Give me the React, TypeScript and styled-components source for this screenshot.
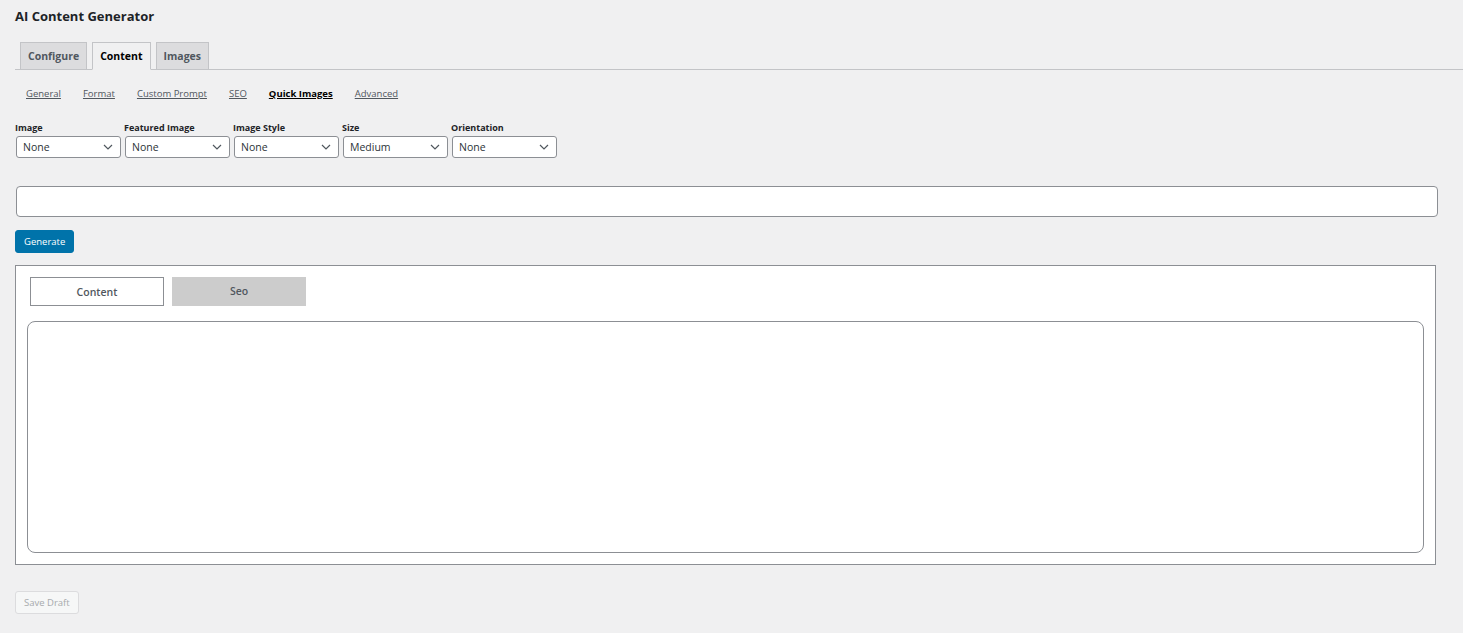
import React, { useState } from 'react';
import styled, { createGlobalStyle } from 'styled-components';

const GlobalStyle = createGlobalStyle`
  html, body {
    margin: 0;
    padding: 0;
    background: #f0f0f1;
  }
  body {
    font-family: "Open Sans", "Noto Sans", "Liberation Sans", sans-serif;
    color: #1d2327;
  }
  * {
    box-sizing: border-box;
  }
`;

const Wrap = styled.div`
  padding: 7px 0 18px 15px;
`;

const Title = styled.h1`
  margin: 0;
  font-size: 13px;
  line-height: 18px;
  font-weight: 700;
  color: #1d2327;
`;

const TabBar = styled.nav`
  display: flex;
  gap: 5px;
  margin-top: 17px;
  padding-left: 5px;
  border-bottom: 1px solid #c3c4c7;
`;

const Tab = styled.a<{ $active?: boolean }>`
  display: block;
  margin-bottom: -1px;
  padding: 0 7px;
  height: 28px;
  line-height: 27px;
  font-size: 10.5px;
  font-weight: 700;
  text-decoration: none;
  cursor: pointer;
  border: 1px solid #c3c4c7;
  border-bottom-color: ${(p) => (p.$active ? '#f0f0f1' : '#c3c4c7')};
  background: ${(p) => (p.$active ? '#f0f0f1' : '#dcdcde')};
  color: ${(p) => (p.$active ? '#000' : '#50575e')};
`;

const SubNav = styled.div`
  display: flex;
  gap: 22px;
  margin-top: 17px;
  padding-left: 11px;
`;

const SubLink = styled.a<{ $active?: boolean }>`
  font-size: 9.5px;
  line-height: 14px;
  text-decoration: underline;
  cursor: pointer;
  font-weight: ${(p) => (p.$active ? 700 : 400)};
  color: ${(p) => (p.$active ? '#000' : '#50575e')};
`;

const Fields = styled.div`
  display: flex;
  gap: 3px;
  margin-top: 20px;
`;

const Field = styled.div`
  display: flex;
  flex-direction: column;
  width: 106px;
`;

const Label = styled.label`
  font-size: 9px;
  line-height: 13px;
  font-weight: 700;
  color: #1d2327;
  margin-bottom: 2px;
`;

const SelectBox = styled.div`
  position: relative;
  margin-left: 1px;
  height: 22px;
  background: #fff;
  border: 1px solid #8c8f94;
  border-radius: 3px;
  font-size: 10.5px;
  line-height: 20px;
  padding-left: 6px;
  color: #2c3338;
  cursor: pointer;

  svg {
    position: absolute;
    right: 7px;
    top: 6px;
  }
`;

const PromptInput = styled.input`
  display: block;
  width: 1422px;
  height: 31px;
  margin: 28px 0 0 1px;
  background: #fff;
  border: 1px solid #8c8f94;
  border-radius: 4px;
  outline: none;
`;

const PrimaryButton = styled.button`
  display: block;
  margin-top: 13px;
  height: 23px;
  padding: 0 8px;
  background: #0073aa;
  border: 1px solid #0073aa;
  border-radius: 3px;
  color: #fff;
  font-family: inherit;
  font-size: 9.5px;
  cursor: pointer;
`;

const ResultBox = styled.div`
  margin-top: 12px;
  width: 1421px;
  height: 300px;
  background: #fff;
  border: 1px solid #8c8f94;
  padding: 11px;
  display: flex;
  flex-direction: column;
`;

const ResultTabs = styled.div`
  display: flex;
  gap: 8px;
  padding-left: 3px;
`;

const ResultTab = styled.button<{ $active?: boolean }>`
  width: 134px;
  height: 29px;
  font-family: inherit;
  font-size: 10.5px;
  font-weight: 600;
  cursor: pointer;
  border: 1px solid ${(p) => (p.$active ? '#8c8f94' : '#ccc')};
  background: ${(p) => (p.$active ? '#fff' : '#ccc')};
  color: #50575e;
  padding: ${(p) => (p.$active ? '1px 0 0' : '0 0 2px')};
`;

const Output = styled.textarea`
  display: block;
  flex: 1;
  margin-top: 15px;
  width: 100%;
  resize: none;
  background: #fff;
  border: 1px solid #8c8f94;
  border-radius: 8px;
  outline: none;
`;

const SecondaryButton = styled.button`
  display: block;
  margin-top: 26px;
  height: 23px;
  padding: 0 8px;
  background: #f6f7f7;
  border: 1px solid #dcdcde;
  border-radius: 3px;
  color: #a7aaad;
  font-family: inherit;
  font-size: 9.5px;
`;

const Chevron = () => (
  <svg width="10" height="8" viewBox="0 0 10 8" fill="none">
    <path d="M1 2l4 4 4-4" stroke="#50575e" strokeWidth="1.2" />
  </svg>
);

const tabs = ['Configure', 'Content', 'Images'];
const sections = ['General', 'Format', 'Custom Prompt', 'SEO', 'Quick Images', 'Advanced'];
const fields = [
  { label: 'Image', value: 'None' },
  { label: 'Featured Image', value: 'None' },
  { label: 'Image Style', value: 'None' },
  { label: 'Size', value: 'Medium' },
  { label: 'Orientation', value: 'None' },
];

export default function App() {
  const [tab, setTab] = useState('Content');
  const [section, setSection] = useState('Quick Images');
  const [view, setView] = useState<'content' | 'seo'>('content');

  return (
    <>
      <GlobalStyle />
      <Wrap>
        <Title>AI Content Generator</Title>

        <TabBar>
          {tabs.map((t) => (
            <Tab key={t} $active={t === tab} onClick={() => setTab(t)}>
              {t}
            </Tab>
          ))}
        </TabBar>

        <SubNav>
          {sections.map((s) => (
            <SubLink key={s} $active={s === section} onClick={() => setSection(s)}>
              {s}
            </SubLink>
          ))}
        </SubNav>

        <Fields>
          {fields.map((f) => (
            <Field key={f.label}>
              <Label>{f.label}</Label>
              <SelectBox>
                {f.value}
                <Chevron />
              </SelectBox>
            </Field>
          ))}
        </Fields>

        <PromptInput type="text" />
        <PrimaryButton>Generate</PrimaryButton>

        <ResultBox>
          <ResultTabs>
            <ResultTab $active={view === 'content'} onClick={() => setView('content')}>
              Content
            </ResultTab>
            <ResultTab $active={view === 'seo'} onClick={() => setView('seo')}>
              Seo
            </ResultTab>
          </ResultTabs>
          <Output />
        </ResultBox>

        <SecondaryButton disabled>Save Draft</SecondaryButton>
      </Wrap>
    </>
  );
}
